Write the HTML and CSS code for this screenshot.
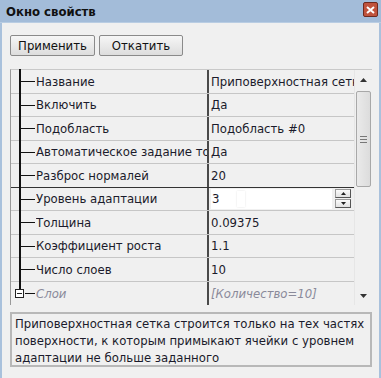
FILE: index.html
```html
<!DOCTYPE html>
<html lang="ru">
<head>
  <meta charset="UTF-8" />
  <title>Окно свойств</title>
  <link rel="stylesheet" href="styles.css">
</head>
<body>

<div class="window">
  <div class="titlebar">
    <span class="title">Окно свойств</span>
    <span class="close">
      <svg width="9" height="8" viewBox="0 0 9 8"><path d="M1 1 L8 7 M8 1 L1 7" stroke="#fff" stroke-width="2"/></svg>
    </span>
  </div>

  <div class="content">
    <div class="toolbar">
      <button class="btn btn-apply">Применить</button>
      <button class="btn btn-undo">Откатить</button>
    </div>

    <div class="grid">
      <div class="rows">
        <div class="row first">
          <div class="tree"></div>
          <div class="name">Название</div>
          <div class="value">Приповерхностная сетка</div>
        </div>
        <div class="row">
          <div class="tree"></div>
          <div class="name">Включить</div>
          <div class="value">Да</div>
        </div>
        <div class="row">
          <div class="tree"></div>
          <div class="name">Подобласть</div>
          <div class="value">Подобласть #0</div>
        </div>
        <div class="row">
          <div class="tree"></div>
          <div class="name">Автоматическое задание толщины</div>
          <div class="value">Да</div>
        </div>
        <div class="row">
          <div class="tree"></div>
          <div class="name">Разброс нормалей</div>
          <div class="value">20</div>
        </div>
        <div class="row selected">
          <div class="tree"></div>
          <div class="name">Уровень адаптации</div>
          <div class="value edit">
            <span class="edit-box">3 <span class="caret"></span></span>
            <span class="spin">
              <span class="spin-btn"><svg width="5" height="3" viewBox="0 0 5 3"><path d="M0 3 L2.5 0 L5 3Z" fill="#222"/></svg></span>
              <span class="spin-btn"><svg width="5" height="3" viewBox="0 0 5 3"><path d="M0 0 L2.5 3 L5 0Z" fill="#222"/></svg></span>
            </span>
          </div>
        </div>
        <div class="row">
          <div class="tree"></div>
          <div class="name">Толщина</div>
          <div class="value">0.09375</div>
        </div>
        <div class="row">
          <div class="tree"></div>
          <div class="name">Коэффициент роста</div>
          <div class="value">1.1</div>
        </div>
        <div class="row">
          <div class="tree"></div>
          <div class="name">Число слоев</div>
          <div class="value">10</div>
        </div>
        <div class="row group">
          <div class="tree"><span class="toggle"></span></div>
          <div class="name">Слои</div>
          <div class="value">[Количество=10]</div>
        </div>
      </div>

      <div class="scrollbar">
        <div class="arrow">
          <svg width="7" height="4" viewBox="0 0 7 4"><path d="M0 4 L3.5 0 L7 4Z" fill="#333"/></svg>
        </div>
        <div class="track">
          <div class="thumb">
            <span class="grip"></span>
          </div>
        </div>
        <div class="arrow">
          <svg width="7" height="4" viewBox="0 0 7 4"><path d="M0 0 L3.5 4 L7 0Z" fill="#333"/></svg>
        </div>
      </div>
    </div>

    <div class="description">
      Приповерхностная сетка строится только на тех частях<br>
      поверхности, к которым примыкают ячейки с уровнем<br>
      адаптации не больше заданного
    </div>
  </div>
</div>

</body>
</html>
```

FILE: styles.css
```css
body {
  margin: 0;
  font-family: "DejaVu Sans Condensed", "DejaVu Sans", sans-serif;
  font-stretch: condensed;
  background: #f0f0f0;
}
.window {
  width: 381px;
  height: 378px;
  box-sizing: border-box;
  border-left: 2px solid #a9c1dc;
  border-right: 2px solid #a9c1dc;
  background: #f0f0f0;
}
.titlebar {
  height: 22px;
  background: #a3bcd9;
  display: flex;
  align-items: center;
  justify-content: space-between;
  padding: 0 3px 0 4px;
  margin: 0 -2px;
  border-bottom: 1px solid #b9cde3;
}
.title {
  font-weight: bold;
  font-size: 13px;
  color: #111;
  margin-left: 2px;
}
.close {
  width: 15px;
  height: 15px;
  align-self: flex-start;
  margin-top: 2px;
  background: #c0533d;
  border: 1px solid #6e2a20;
  border-radius: 2px;
  display: flex;
  align-items: center;
  justify-content: center;
  box-sizing: border-box;
}
.content {
  padding: 12px 8px 0 8px;
}
.toolbar {
  display: flex;
  gap: 4px;
  height: 21px;
}
.btn {
  font-family: "DejaVu Sans Condensed", "DejaVu Sans", sans-serif;
  font-stretch: condensed;
  font-size: 13px;
  color: #111;
  background: linear-gradient(#f6f6f6, #dddddd);
  border: 1px solid #8a8a8a;
  border-radius: 2px;
  padding: 0;
  height: 21px;
}
.btn-apply {
  width: 85px;
}
.btn-undo {
  width: 84px;
}
.grid {
  display: flex;
  margin-top: 13px;
  width: 362px;
  height: 236px;
  border-top: 1px solid #c9c9c9;
  border-left: 1px solid #9a9a9a;
  box-sizing: border-box;
}
.rows {
  flex: 1;
  display: flex;
  flex-direction: column;
}
.row {
  display: grid;
  grid-template-columns: 25px 171px 2px 1fr;
  height: 23.5px;
  font-size: 13px;
  color: #1b1b2b;
  border-bottom: 1px solid #c6c6c6;
  box-sizing: border-box;
}
.row .tree {
  position: relative;
}
.row .tree::before {
  content: "";
  position: absolute;
  left: 8px;
  top: -1px;
  bottom: -1px;
  width: 2px;
  background: #111;
}
.row .tree::after {
  content: "";
  position: absolute;
  left: 9px;
  right: 1px;
  top: 11px;
  height: 1px;
  background: #111;
}
.row .name {
  white-space: nowrap;
  overflow: hidden;
  display: flex;
  align-items: center;
}
.row .value {
  grid-column: 4;
  white-space: nowrap;
  overflow: hidden;
  display: flex;
  align-items: center;
  padding-left: 2px;
  border-left: 2px solid #4a4a4a;
  margin-left: -2px;
}
.row.selected {
  border-top: 1px solid #333;
  margin-top: -1px;
  height: 24.5px;
}
.row.selected .value {
  padding: 1px 3px 1px 2px;
}
.edit-box {
  flex: 1;
  background: #fff;
  height: 20px;
  display: flex;
  align-items: center;
  padding-left: 1px;
}
.caret {
  display: inline-block;
  width: 8px;
  height: 16px;
  background: #fff;
  margin-left: 18px;
  box-shadow: 0 0 2px #ddd;
}
.spin {
  display: flex;
  flex-direction: column;
  gap: 1px;
  margin-left: 3px;
  width: 16px;
}
.spin-btn {
  height: 9px;
  background: linear-gradient(#fafafa, #e2e2e2);
  border: 1px solid #9a9a9a;
  border-right-color: #555;
  border-bottom-color: #555;
  box-sizing: border-box;
  display: flex;
  align-items: center;
  justify-content: center;
}
.row.group {
  border-bottom: none;
  color: #8a8a9a;
  font-style: italic;
}
.row.group .tree::before {
  bottom: 14px;
}
.row.group .tree::after {
  left: 14px;
}
.toggle {
  position: absolute;
  left: 4px;
  top: 7px;
  width: 9px;
  height: 9px;
  box-sizing: border-box;
  border: 1px solid #222;
  background: #fff;
  z-index: 1;
}
.toggle::after {
  content: "";
  position: absolute;
  left: 1px;
  right: 1px;
  top: 3px;
  height: 1px;
  background: #222;
}
.scrollbar {
  width: 17px;
  display: flex;
  flex-direction: column;
  background: #f0f0f0;
  border-left: 1px solid #e6e6e6;
}
.arrow {
  height: 19px;
  display: flex;
  align-items: center;
  justify-content: center;
}
.track {
  flex: 1;
}
.thumb {
  margin: 2px 1px 0 1px;
  height: 94px;
  background: linear-gradient(90deg, #eaeaea, #dcdcdc);
  border: 1px solid #a8a8a8;
  border-radius: 2px;
  display: flex;
  align-items: center;
  justify-content: center;
}
.grip {
  width: 7px;
  height: 5px;
  border-top: 1px solid #777;
  border-bottom: 1px solid #777;
  position: relative;
}
.grip::after {
  content: "";
  position: absolute;
  left: 0;
  right: 0;
  top: 2px;
  height: 1px;
  background: #777;
}
.description {
  margin-top: 7px;
  width: 362px;
  height: 55px;
  box-sizing: border-box;
  border: 2px solid #b8b8b8;
  padding: 1px 3px;
  font-size: 13px;
  line-height: 17px;
  white-space: nowrap;
  overflow: hidden;
  color: #1b1b2b;
}
```
